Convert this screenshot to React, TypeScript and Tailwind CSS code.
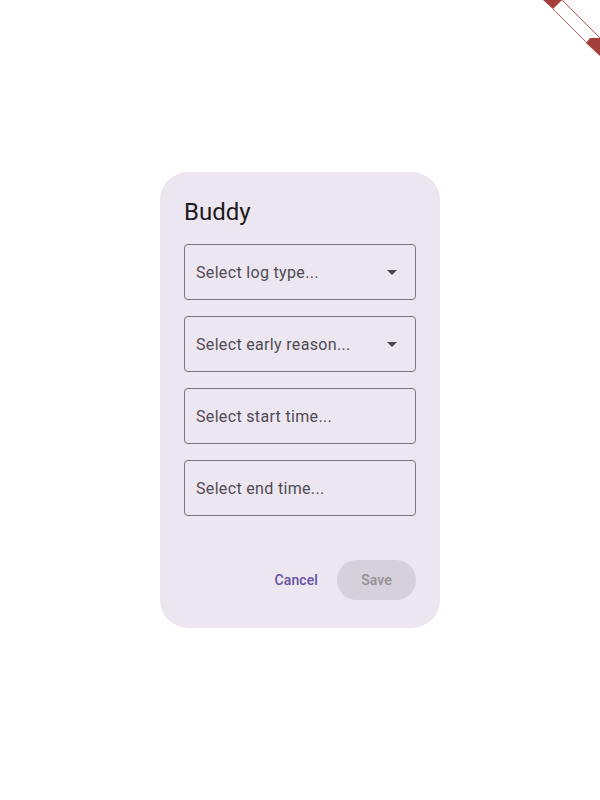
import { ChevronDown } from "lucide-react";

const fields = [
    { label: "Select log type...", dropdown: true },
    { label: "Select early reason...", dropdown: true },
    { label: "Select start time...", dropdown: false },
    { label: "Select end time...", dropdown: false },
];

function DropArrow() {
    return (
        <svg width="24" height="24" viewBox="0 0 24 24" className="shrink-0">
            <path d="M7 10l5 5 5-5z" fill="#49454f" />
        </svg>
    );
}

// Flutter-style debug ribbon peeking in from the corner
function DebugRibbon() {
    return (
        <svg
            className="absolute top-0 right-0"
            width="60"
            height="60"
            viewBox="540 0 60 60"
        >
            <polygon points="543,0 562,0 553,9" fill="#a4403c" />
            <line x1="553" y1="9" x2="590" y2="46" stroke="#c25a55" strokeWidth="1" />
            <line x1="562" y1="0" x2="600" y2="38" stroke="#c25a55" strokeWidth="1" />
            <polygon points="590,38 600,38 600,56 586,43" fill="#a4403c" />
        </svg>
    );
}

export default function App() {
    return (
        <div
            className="relative w-[600px] h-[800px] bg-white overflow-hidden"
            style={{ fontFamily: "Roboto, 'Noto Sans', sans-serif" }}
        >
            <DebugRibbon />
            <div className="pt-[172px] flex justify-center">
                <div className="w-[280px] rounded-[28px] bg-[#ece6f0] pt-6 px-6 pb-[28px]">
                    <h2 className="text-[24px] leading-8 text-[#1d1b20]">Buddy</h2>

                    <div className="mt-4 flex flex-col gap-4">
                        {fields.map((f) => (
                            <div
                                key={f.label}
                                className="h-14 flex items-center justify-between rounded border border-[#79747e] pl-[11px] pr-[11px]"
                            >
                                <span className="pt-[2px] text-[16px] tracking-[0.33px] text-[#4f4b55]">
                                    {f.label}
                                </span>
                                {f.dropdown && <DropArrow />}
                            </div>
                        ))}
                    </div>

                    <div className="mt-[44px] flex justify-end items-center gap-[7px]">
                        <button className="h-10 pl-[10px] pr-3 rounded-full text-[14px] font-medium tracking-[0.1px] text-[#6750a4]">
                            Cancel
                        </button>
                        <button
                            disabled
                            className="h-10 w-[79px] rounded-full bg-[#d6d0da] text-[14px] font-medium tracking-[0.1px] text-[#938f96]"
                        >
                            Save
                        </button>
                    </div>
                </div>
            </div>
        </div>
    );
}
